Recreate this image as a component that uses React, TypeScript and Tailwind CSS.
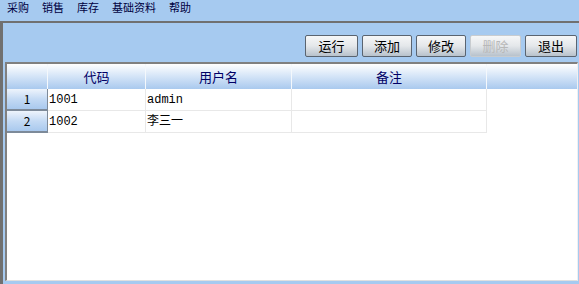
import React from "react";

const menus = ["采购", "销售", "库存", "基础资料", "帮助"];
const buttons = [
  { t: "运行", w: 53, d: false },
  { t: "添加", w: 50, d: false },
  { t: "修改", w: 50, d: false },
  { t: "删除", w: 51, d: true },
  { t: "退出", w: 52, d: false },
];
const rows = [
  { n: "1", code: "1001", name: "admin" },
  { n: "2", code: "1002", name: "李三一" },
];

export default function App() {
  const font = { fontFamily: '"Noto Sans CJK SC", "Liberation Sans", sans-serif' };
  const mono = { fontFamily: '"Liberation Mono", "Noto Sans CJK SC", monospace' };
  return (
    <div className="w-[579px] h-[284px] bg-[#a6caf0] overflow-hidden flex flex-col" style={font}>
      <div className="h-[21px] flex items-start gap-[13px] pl-[7px] text-[11px] text-[#000040] leading-[14px] font-normal">
        {menus.map((m) => (
          <span key={m}>{m}</span>
        ))}
      </div>
      <div className="flex-1 flex flex-col border-t-[2px] border-l-[3px] border-t-[#707070] border-l-[#707070] pb-[3px]">
        <div className="h-[35px] flex items-end justify-end gap-[4px] pr-[2px] pb-[1px]">
          {buttons.map((b) => (
            <div
              key={b.t}
              className={`h-[22px] flex items-center justify-center rounded-[2px] border text-[13px] ${
                b.d ? "border-[#c8ccd0] text-[#b8b8b8]" : "border-[#5a6470] text-black"
              } bg-gradient-to-b from-[#f6f7f8] via-[#e4e7ea] to-[#b8c2cc]`}
              style={{ width: b.w }}
            >
              {b.t}
            </div>
          ))}
        </div>
        <div className="flex-1 ml-[2px] mr-[1px] mt-[4px] border-t-[2px] border-l-[2px] border-t-[#808080] border-l-[#808080] border-r border-b border-r-[#f0f0f0] border-b-[#e0e0e0] bg-white flex flex-col">
          <div className="h-[25px] flex bg-gradient-to-b from-[#ffffff] to-[#a9c9ee] text-[13px] text-[#000066]">
            <div className="w-[41px] border-r border-[#f4f8fc]"></div>
            <div className="w-[98px] border-r border-[#f4f8fc] flex items-center justify-center">代码</div>
            <div className="w-[146px] border-r border-[#f4f8fc] flex items-center justify-center">用户名</div>
            <div className="w-[195px] border-r border-[#f4f8fc] flex items-center justify-center">备注</div>
            <div className="flex-1"></div>
          </div>
          {rows.map((r) => (
            <div key={r.n} className="h-[22px] flex text-[12px] text-black">
              <div className="w-[41px] flex items-center justify-center border-b-[2px] border-r border-[#7d8a99] bg-gradient-to-b from-[#eef4fc] via-[#c4daf4] to-[#a9c9ee]">
                {r.n}
              </div>
              <div className="w-[98px] flex items-center border-r border-b border-[#e8e8e8] pl-[1px]" style={mono}>
                {r.code}
              </div>
              <div className="w-[146px] flex items-center border-r border-b border-[#e8e8e8] pl-[1px]" style={mono}>
                {r.name}
              </div>
              <div className="w-[195px] border-r border-b border-[#e8e8e8]"></div>
            </div>
          ))}
        </div>
      </div>
    </div>
  );
}
